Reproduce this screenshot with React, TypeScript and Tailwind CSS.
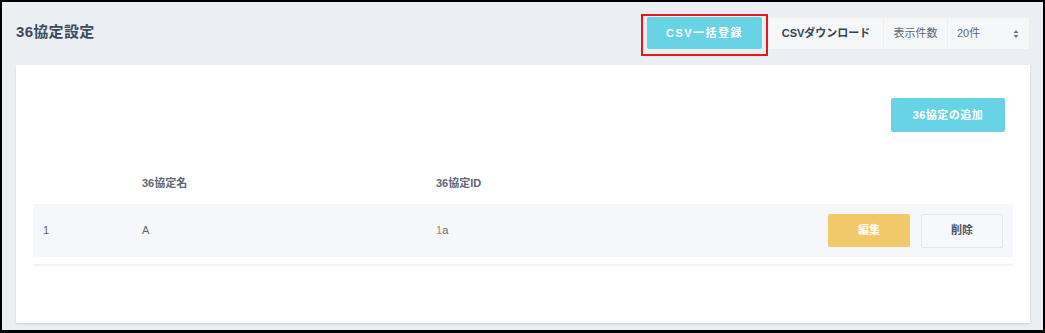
import React from "react";

const font = { fontFamily: '"Liberation Sans", "Noto Sans CJK JP", sans-serif' };

export default function App() {
  return (
    <div
      className="w-[1045px] h-[333px] border-black border-l-2 border-t-2 border-r-2 border-b-[3px] bg-[#ebeef2] flex flex-col overflow-hidden"
      style={font}
    >
      {/* header */}
      <div className="flex items-start h-[63px] pl-[14px] pr-[13px]">
        <h1 className="mt-[19px] text-[15px] leading-[22px] font-bold text-[#3c4a5d] tracking-[0.3px]">36協定設定</h1>
        <div className="ml-auto mt-[15px] flex items-stretch h-[33px]">
          <div className="relative mr-[6px]">
            <button className="w-[115px] h-[32px] bg-[#67d3e4] rounded-[2px] text-white text-[11px] font-bold tracking-[1.5px]">
              CSV一括登録
            </button>
            <div className="absolute left-[-6px] top-[-3px] w-[127px] h-[42px] border-2 border-[#e8161b] pointer-events-none" />
          </div>
          <button className="w-[116px] bg-[#f6f7f9] border border-[#eceef1] text-[#374353] text-[11px] font-bold">
            CSVダウンロード
          </button>
          <div className="w-[64px] bg-[#f6f7f9] border border-[#eceef1] border-l-0 flex items-center justify-center text-[11px] text-[#5d6877]">
            表示件数
          </div>
          <div className="w-[82px] bg-[#f6f7f9] border border-[#eceef1] border-l-0 flex items-center pl-[9px] pr-[10px] text-[11px] text-[#5d6877]">
            <span>20件</span>
            <svg className="ml-auto" width="6" height="10" viewBox="0 0 6 10">
              <path d="M3 1 L5.5 4 L0.5 4 Z" fill="#6b7684" />
              <path d="M3 9 L5.5 6 L0.5 6 Z" fill="#6b7684" />
            </svg>
          </div>
        </div>
      </div>

      {/* card */}
      <div className="ml-[14px] mr-[13px] h-[258px] bg-white shadow-[0_1px_2px_rgba(0,0,0,0.12)] flex flex-col px-[17px]">
        <div className="flex justify-end pt-[33px] pr-[8px]">
          <button className="w-[114px] h-[34px] bg-[#67d3e4] rounded-[2px] text-white text-[11px] font-bold tracking-[0.5px]">
            36協定の追加
          </button>
        </div>
        <div className="mt-[38px] flex items-center h-[26px] text-[11px] font-bold text-[#5b6573]">
          <div className="w-[109px]" />
          <div className="w-[294px]">36協定名</div>
          <div>36協定ID</div>
        </div>
        <div className="mt-[8px] h-[53px] bg-[#f5f7fa] flex items-center text-[11px] text-[#5b6573]">
          <div className="w-[109px] pl-[10px]">1</div>
          <div className="w-[294px]">A</div>
          <div>
            <span className="text-[#a88a5a]">1</span>a
          </div>
          <div className="ml-auto flex items-center gap-[11px] pr-[10px]">
            <button className="w-[82px] h-[33px] bg-[#f2c96a] rounded-[2px] text-white text-[11px] font-bold">
              編集
            </button>
            <button className="w-[82px] h-[34px] bg-[#f7f8fa] border border-[#e3e6ea] rounded-[2px] text-[#4a5565] text-[11px] font-bold">
              削除
            </button>
          </div>
        </div>
        <div className="mt-[7px] h-[2px] bg-[#f2f3f5]" />
      </div>
    </div>
  );
}
